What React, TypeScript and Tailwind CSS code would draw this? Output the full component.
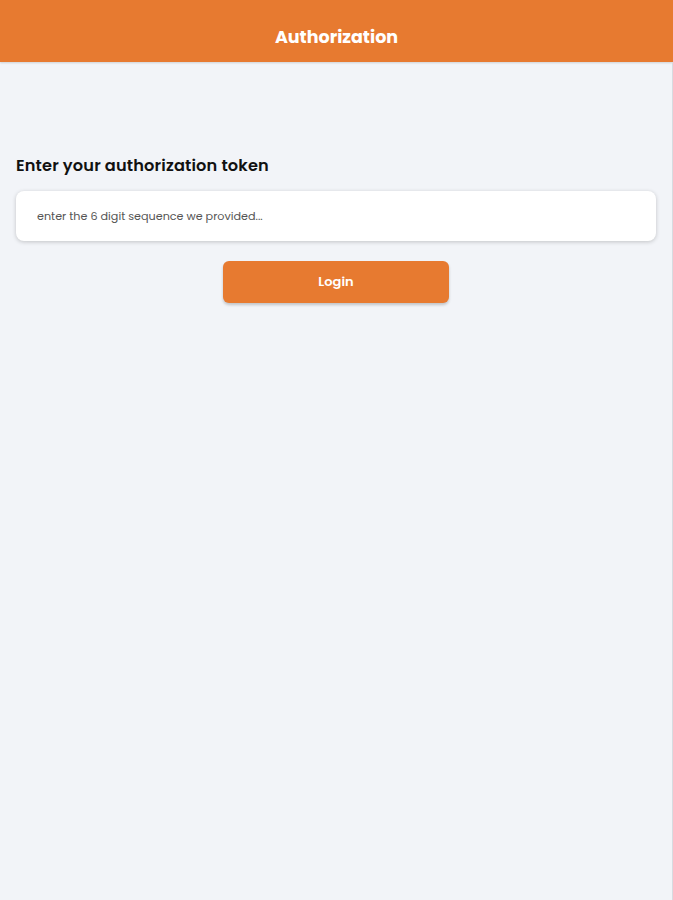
import React from "react";

export default function App() {
  return (
    <div className="w-[673px] h-[900px] flex flex-col bg-[#f2f4f8]" style={{ fontFamily: "Poppins, Inter, 'Open Sans', sans-serif" }}>
      <header className="h-[62px] bg-[#e77a30] flex items-center justify-center shadow-[0_1px_2px_rgba(0,0,0,0.15)] shrink-0">
        <h1 className="text-white text-[17.5px] font-bold mt-[12px]">Authorization</h1>
      </header>
      <main className="flex-1 flex flex-col px-[16px] pt-[93px] border-r border-[#d8dbe0]">
        <h2 className="text-[16.2px] font-semibold text-[#111] leading-[22px] tracking-[0.15px]">Enter your authorization token</h2>
        <div className="mt-[14px] h-[50px] bg-white rounded-[8px] shadow-[0_1px_4px_rgba(0,0,0,0.2)] flex items-center px-[21px]">
          <input
            className="w-full outline-none text-[11.2px] text-[#333] placeholder:text-[#555] bg-transparent"
            placeholder="enter the 6 digit sequence we provided..."
          />
        </div>
        <div className="flex justify-center mt-[20px]">
          <button className="w-[226px] h-[42px] bg-[#e77a30] rounded-[6px] text-white text-[13px] font-semibold shadow-[0_2px_3px_rgba(0,0,0,0.2)]">
            Login
          </button>
        </div>
      </main>
    </div>
  );
}
